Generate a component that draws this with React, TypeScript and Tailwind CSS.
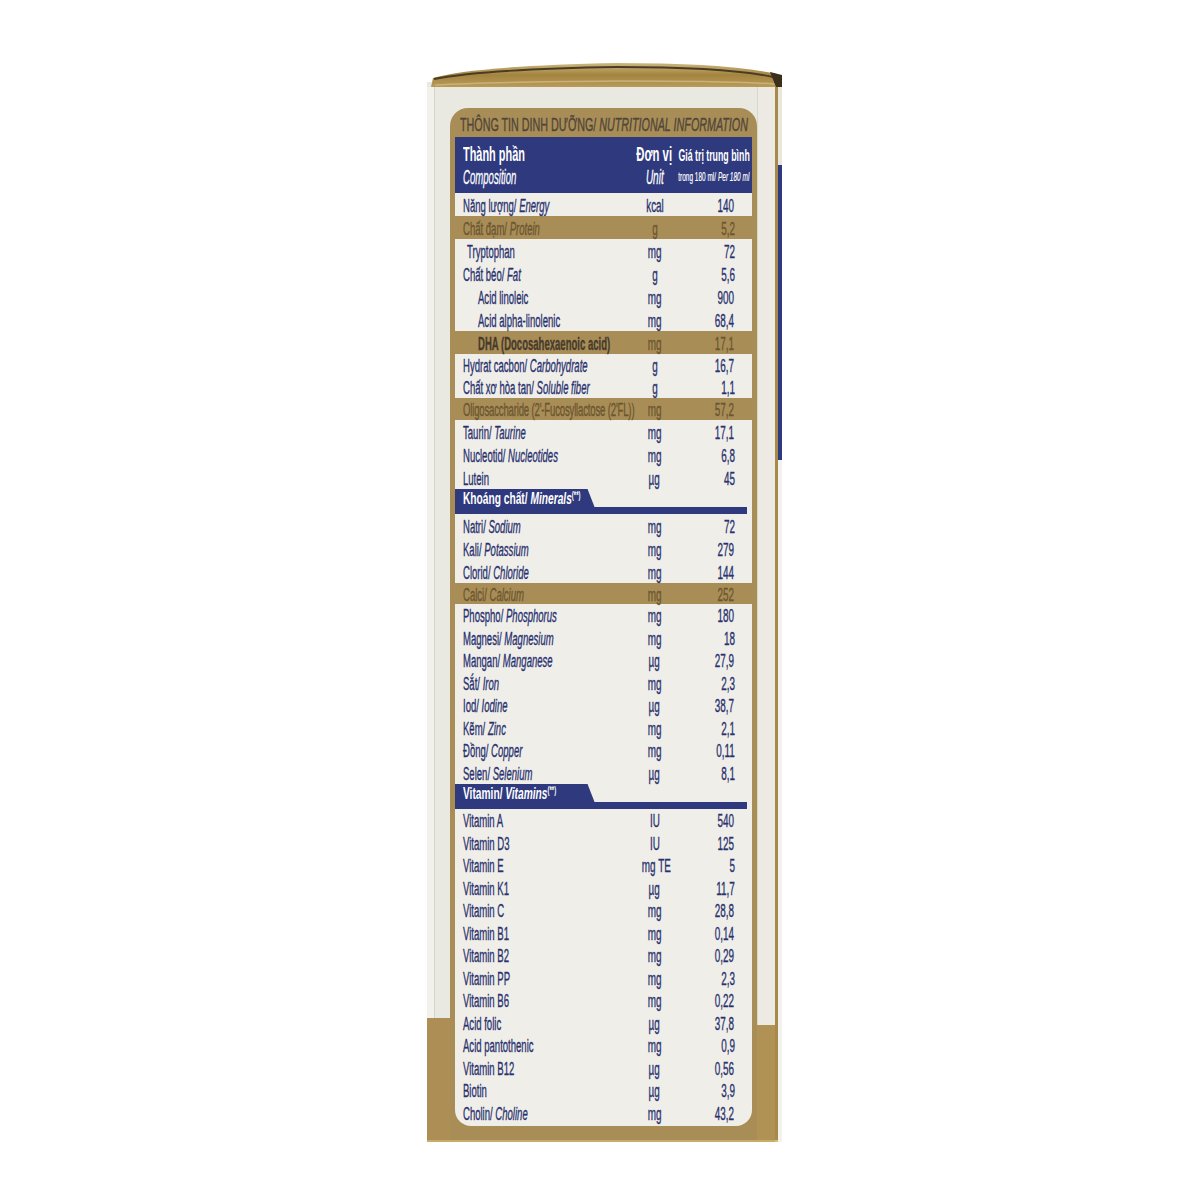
import React from "react";

type Item = {
  label: React.ReactNode;
  unit: string;
  value: string;
  indent?: number;
};

const it = (v: string) => <i>{v}</i>;

function Line({ item, h, tone }: { item: Item; h: string; tone: "navy" | "gold" }) {
  const pad = item.indent === 2 ? "pl-[23px]" : item.indent === 1 ? "pl-[12px]" : "pl-[8px]";
  const color = tone === "gold" ? "text-[#6a5630]" : "text-[#29316f]";
  return (
    <div className={`flex items-center pr-[17px] pt-[2px] ${h} ${color}`}>
      <div className={`flex-1 min-w-0 ${pad}`}>
        <span className="inline-block origin-left scale-x-[0.53] whitespace-nowrap">{item.label}</span>
      </div>
      <div className="w-[50px] text-center">
        <span className="inline-block origin-center scale-x-[0.55] whitespace-nowrap">{item.unit}</span>
      </div>
      <div className="w-[55px] text-right">
        <span className="inline-block origin-right scale-x-[0.55] whitespace-nowrap">{item.value}</span>
      </div>
    </div>
  );
}

function Tab({ label, italic }: { label: string; italic: string }) {
  return (
    <div className="flex flex-col h-[25px]">
      <div className="h-[18px] w-[140px] bg-[#2f3a7e] [clip-path:polygon(0_0,133px_0,140px_100%,0_100%)] flex items-center pl-[8px]">
        <span className="inline-block origin-left scale-x-[0.6] whitespace-nowrap text-white font-bold text-[17px] leading-none [-webkit-text-stroke:0px]">
          {label}
          <i>{italic}</i>
          <sup className="text-[10px]">(**)</sup>
        </span>
      </div>
      <div className="h-[7px] bg-[#2f3a7e] mr-[5px]" />
    </div>
  );
}

const block2: Item[] = [
  { label: "Tryptophan", unit: "mg", value: "72", indent: 1 },
  { label: <>Chất béo/ {it("Fat")}</>, unit: "g", value: "5,6" },
  { label: "Acid linoleic", unit: "mg", value: "900", indent: 2 },
  { label: "Acid alpha-linolenic", unit: "mg", value: "68,4", indent: 2 },
];

const block3: Item[] = [
  { label: <>Hydrat cacbon/ {it("Carbohydrate")}</>, unit: "g", value: "16,7" },
  { label: <>Chất xơ hòa tan/ {it("Soluble fiber")}</>, unit: "g", value: "1,1" },
];

const block4a: Item[] = [
  { label: <>Taurin/ {it("Taurine")}</>, unit: "mg", value: "17,1" },
  { label: <>Nucleotid/ {it("Nucleotides")}</>, unit: "mg", value: "6,8" },
  { label: "Lutein", unit: "µg", value: "45" },
];

const minerals1: Item[] = [
  { label: <>Natri/ {it("Sodium")}</>, unit: "mg", value: "72" },
  { label: <>Kali/ {it("Potassium")}</>, unit: "mg", value: "279" },
  { label: <>Clorid/ {it("Chloride")}</>, unit: "mg", value: "144" },
];

const minerals2: Item[] = [
  { label: <>Phospho/ {it("Phosphorus")}</>, unit: "mg", value: "180" },
  { label: <>Magnesi/ {it("Magnesium")}</>, unit: "mg", value: "18" },
  { label: <>Mangan/ {it("Manganese")}</>, unit: "µg", value: "27,9" },
  { label: <>Sắt/ {it("Iron")}</>, unit: "mg", value: "2,3" },
  { label: <>Iod/ {it("Iodine")}</>, unit: "µg", value: "38,7" },
  { label: <>Kẽm/ {it("Zinc")}</>, unit: "mg", value: "2,1" },
  { label: <>Đồng/ {it("Copper")}</>, unit: "mg", value: "0,11" },
  { label: <>Selen/ {it("Selenium")}</>, unit: "µg", value: "8,1" },
];

const vitamins: Item[] = [
  { label: "Vitamin A", unit: "IU", value: "540" },
  { label: "Vitamin D3", unit: "IU", value: "125" },
  { label: "Vitamin E", unit: "mg TE", value: "5" },
  { label: "Vitamin K1", unit: "µg", value: "11,7" },
  { label: "Vitamin C", unit: "mg", value: "28,8" },
  { label: "Vitamin B1", unit: "mg", value: "0,14" },
  { label: "Vitamin B2", unit: "mg", value: "0,29" },
  { label: "Vitamin PP", unit: "mg", value: "2,3" },
  { label: "Vitamin B6", unit: "mg", value: "0,22" },
  { label: "Acid folic", unit: "µg", value: "37,8" },
  { label: "Acid pantothenic", unit: "mg", value: "0,9" },
  { label: "Vitamin B12", unit: "µg", value: "0,56" },
  { label: "Biotin", unit: "µg", value: "3,9" },
  { label: <>Cholin/ {it("Choline")}</>, unit: "mg", value: "43,2" },
];

function Lid() {
  return (
    <svg width="355" height="25" viewBox="0 0 355 25" className="block">
      <defs>
        <linearGradient id="lidg" x1="0" y1="0" x2="0" y2="1">
          <stop offset="0" stopColor="#cdb780" />
          <stop offset="0.5" stopColor="#a3843f" />
          <stop offset="1" stopColor="#b99b5a" />
        </linearGradient>
      </defs>
      <rect x="0" y="20" width="355" height="5" fill="#eae9e1" />
      <path d="M4 25 L6 16 Q45 4 190 1 Q300 1 350 12 L352 25 Z" fill="url(#lidg)" />
      <path d="M7 17 Q60 7 190 5 Q300 5 346 15" stroke="#4a3c24" strokeWidth="1.8" fill="none" />
      <path d="M8 23 Q60 20 190 19 Q300 19 348 22" stroke="#c9b27a" strokeWidth="1.5" fill="none" />
      <path d="M343 10 L355 13 L355 25 L349 25 Z" fill="#3b2f1c" />
    </svg>
  );
}

export default function App() {
  return (
    <div className="w-[1200px] h-[1200px] bg-white pt-[62px] pl-[427px] font-['Liberation_Sans',Arial,sans-serif]">
      <div className="w-[355px] flex flex-col">
        <Lid />
        <div className="flex h-[1055px]">
          {/* left side of box */}
          <div className="w-[23px] flex flex-col">
            <div className="h-[931px] flex">
              <div className="w-[7px] bg-[#f2f1ec]" />
              <div className="w-[1px] bg-[#d6d4c9]" />
              <div className="flex-1 bg-[#eae9e1]" />
            </div>
            <div className="flex-1 bg-[#ad8f55] border-b-2 border-[#c8ad6a]" />
          </div>

          {/* nutrition panel */}
          <div className="w-[307px] flex flex-col bg-[#eae9e1]">
            <div className="h-[21px]" />
            <div className="flex-1 flex flex-col bg-[#a98d57] rounded-t-[18px] px-[5px] border-b-2 border-[#c8ad6a]">
              <div className="h-[29px] flex items-end pb-[3px] pl-[5px]">
                <span className="inline-block origin-left scale-x-[0.565] whitespace-nowrap text-[19px] leading-none text-[#4f4638] [-webkit-text-stroke:0.4px_#4f4638]">
                  THÔNG TIN DINH DƯỠNG/ <i>NUTRITIONAL INFORMATION</i>
                </span>
              </div>

              <div className="h-[56px] bg-[#2f3a7e] text-white flex pr-[2px]">
                <div className="flex-1 min-w-0 pl-[8px] pt-[6px] flex flex-col">
                  <span className="inline-block origin-left scale-x-[0.52] whitespace-nowrap font-bold text-[21px] leading-[22px]">Thành phần</span>
                  <span className="inline-block origin-left scale-x-[0.48] whitespace-nowrap italic text-[20px] leading-[24px] [-webkit-text-stroke:0.3px_#ffffff]">Composition</span>
                </div>
                <div className="w-[50px] pt-[6px] flex flex-col items-center">
                  <span className="inline-block origin-center scale-x-[0.54] whitespace-nowrap font-bold text-[21px] leading-[22px]">Đơn vị</span>
                  <span className="inline-block origin-center scale-x-[0.5] whitespace-nowrap italic text-[20px] leading-[24px] [-webkit-text-stroke:0.3px_#ffffff]">Unit</span>
                </div>
                <div className="w-[70px] pt-[9px] flex flex-col items-end">
                  <span className="inline-block origin-right scale-x-[0.55] whitespace-nowrap font-bold text-[16px] leading-[20px]">Giá trị trung bình</span>
                  <span className="inline-block origin-right scale-x-[0.5] whitespace-nowrap text-[13px] leading-[22px] [-webkit-text-stroke:0.2px_#ffffff]">
                    trong 180 ml/ <i>Per 180 ml</i>
                  </span>
                </div>
              </div>

              <div className="text-[18px] leading-none [-webkit-text-stroke:0.35px_currentColor]">
                <div className="bg-[#efeee8]">
                  <Line tone="navy" h="h-[23px]" item={{ label: <>Năng lượng/ {it("Energy")}</>, unit: "kcal", value: "140" }} />
                </div>
                <Line tone="gold" h="h-[23px]" item={{ label: <>Chất đạm/ {it("Protein")}</>, unit: "g", value: "5,2" }} />
                <div className="bg-[#efeee8]">
                  {block2.map((r, i) => (
                    <Line key={i} tone="navy" h="h-[23px]" item={r} />
                  ))}
                </div>
                <Line tone="gold" h="h-[23px]" item={{ label: <span className="font-bold text-[#463b2c]">DHA (Docosahexaenoic acid)</span>, unit: "mg", value: "17,1", indent: 2 }} />
                <div className="bg-[#efeee8]">
                  {block3.map((r, i) => (
                    <Line key={i} tone="navy" h="h-[22px]" item={r} />
                  ))}
                </div>
                <Line tone="gold" h="h-[22px]" item={{ label: <span className="tracking-[-0.3px]">Oligosaccharide (2'-Fucosyllactose (2'FL))</span>, unit: "mg", value: "57,2" }} />
                <div className="bg-[#efeee8]">
                  {block4a.map((r, i) => (
                    <Line key={i} tone="navy" h="h-[23px]" item={r} />
                  ))}
                  <Tab label="Khoáng chất/ " italic="Minerals" />
                  {minerals1.map((r, i) => (
                    <Line key={i} tone="navy" h="h-[23px]" item={r} />
                  ))}
                </div>
                <Line tone="gold" h="h-[21px]" item={{ label: <>Calci/ {it("Calcium")}</>, unit: "mg", value: "252" }} />
                <div className="bg-[#efeee8] rounded-b-[16px]">
                  {minerals2.map((r, i) => (
                    <Line key={i} tone="navy" h="h-[22.5px]" item={r} />
                  ))}
                  <Tab label="Vitamin/ " italic="Vitamins" />
                  {vitamins.map((r, i) => (
                    <Line key={i} tone="navy" h="h-[22.5px]" item={r} />
                  ))}
                  <div className="h-[2px]" />
                </div>
              </div>
            </div>
          </div>

          {/* right side of box */}
          <div className="w-[19px] flex flex-col">
            <div className="h-[938px] bg-[#eceae3] border-l border-[#d9d6ca]" />
            <div className="flex-1 bg-[#b09255] border-b-2 border-[#c8ad6a]" />
          </div>
          <div className="w-[3px] bg-[#a8894c] border-b-2 border-[#d8be72]" />
          <div className="w-[4px] flex flex-col">
            <div className="h-[78px] bg-[#e9e6dc]" />
            <div className="h-[295px] bg-[#2f3a7e]" />
            <div className="flex-1 bg-[#f3f2ee]" />
          </div>
        </div>
      </div>
    </div>
  );
}
